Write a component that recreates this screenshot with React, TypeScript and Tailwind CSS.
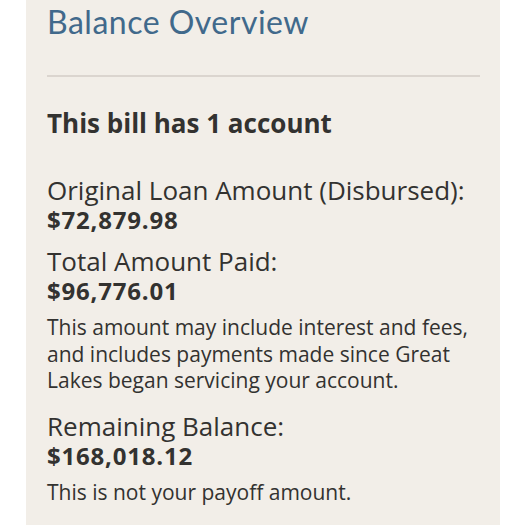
const body = "font-['Open_Sans',sans-serif] text-[#333230]";

function Item({ label, amount, note }: { label: string; amount: string; note?: string }) {
  return (
    <div>
      <p className="text-[26px] leading-[28px]">{label}</p>
      <p className="mt-[2px] text-[24px] leading-[28px] font-bold tracking-[0.8px]">{amount}</p>
      {note && <p className="mt-[9px] text-[21px] leading-[26.5px]">{note}</p>}
    </div>
  );
}

export default function App() {
  return (
    <div className="h-[526px] w-[526px] bg-white px-[26px] pb-px">
      <div className={`h-full bg-[#f2eee8] pl-[21px] pr-[20px] ${body}`}>
        <h1 className="pt-[2px] font-['Lato',sans-serif] text-[32px] leading-[40px] tracking-[0.5px] text-[#41698b]">
          Balance Overview
        </h1>
        <hr className="mt-[33px] border-0 h-[2px] bg-[#dbd5cf]" />
        <h2 className="mt-[30px] text-[26px] leading-[32px] font-bold">This bill has 1 account</h2>
        <div className="mt-[37px] flex flex-col">
          <Item label="Original Loan Amount (Disbursed):" amount="$72,879.98" />
          <div className="mt-[13px]">
            <Item
              label="Total Amount Paid:"
              amount="$96,776.01"
              note="This amount may include interest and fees, and includes payments made since Great Lakes began servicing your account."
            />
          </div>
          <div className="mt-[18px]">
            <Item label="Remaining Balance:" amount="$168,018.12" note="This is not your payoff amount." />
          </div>
        </div>
      </div>
    </div>
  );
}
